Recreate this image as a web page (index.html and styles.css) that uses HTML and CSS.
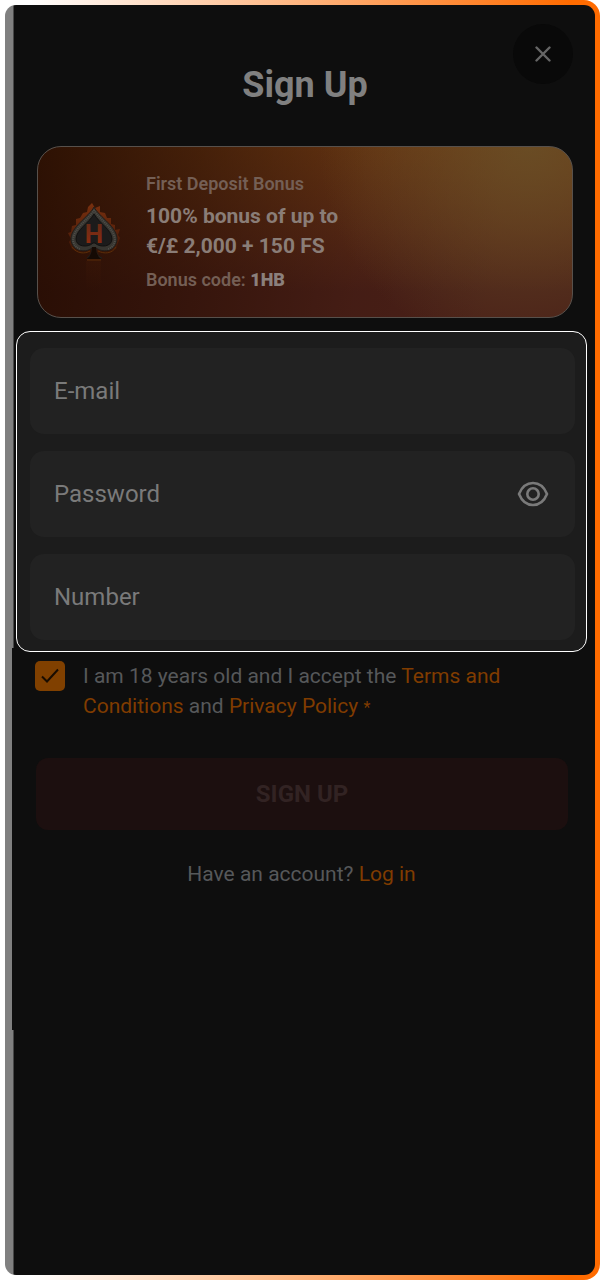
FILE: index.html
```html
<!DOCTYPE html>
<html lang="en">
<head>
  <meta charset="UTF-8">
  <meta name="viewport" content="width=device-width, initial-scale=1">
  <title>Sign Up</title>
  <link rel="stylesheet" href="styles.css">
</head>
<body>
  <div class="frame">
    <main class="panel">
      <header class="header">
        <h1>Sign Up</h1>
        <button class="close" type="button" aria-label="Close">
          <svg width="16" height="16" viewBox="0 0 16 16" fill="none" stroke="currentColor" stroke-width="2.4" stroke-linecap="round">
            <path d="M1.500 1.500 14.500 14.500M14.500 1.500 1.500 14.500"/>
          </svg>
        </button>
      </header>

      <section class="bonus">
        <svg class="spade" width="60" height="116" viewBox="0 -26 60 116" aria-hidden="true">
          <defs>
            <linearGradient id="fire" x1="0" y1="0" x2="0" y2="1">
              <stop offset="0" stop-color="#79300f"/>
              <stop offset=".7" stop-color="#4f1d09"/>
              <stop offset="1" stop-color="#301205"/>
            </linearGradient>
            <linearGradient id="letter" x1="0" y1="0" x2="0" y2="1">
              <stop offset="0" stop-color="#5e2a18"/>
              <stop offset="1" stop-color="#962c0e"/>
            </linearGradient>
            <linearGradient id="beam" x1="0" y1="0" x2="0" y2="1">
              <stop offset="0" stop-color="#4a1d08" stop-opacity=".2"/>
              <stop offset="1" stop-color="#4a1d08" stop-opacity="0"/>
            </linearGradient>
          </defs>
          <path fill="url(#beam)" d="M24 61h15v29H24z"/>
          <path fill="url(#fire)" d="M30 3 33 8 38 6 38 12 43 13 45 18 49 18 49 24 53 25 53 30 58 29 56 35 58 38 56 43 54 49 47 53 37 52 37 56H27L27 52 17 53 10 49 7 42 9 39 6 33 9 32 10 26 14 25 14 19 18 18 21 13 25 12 26 7z"/>
          <path fill="#373530" stroke="#211d1a" d="M32 7C27 17 8 27 9 40c1 10 13 14 21 8 0 5-2 8-5 10h15c-4-2-6-5-6-10 9 6 20 2 21-8C56 27 37 17 32 7z"/>
          <path fill="none" stroke="#4f4e49" stroke-width="2" stroke-dasharray="1 1" d="M32 10C27 19 11 29 11 40q1 7 7 9M32 10c5 9 21 19 21 30q-1 7-7 9"/>
          <path fill="#1c1b1b" stroke="#12100f" d="M32 14C27 23 14 30 14 39c0 8 12 9 17 4h2c5 5 17 4 17-4 0-9-13-16-18-25z"/>
          <path fill="#150a04" d="M30 47h4c0 6 2 9 5 12H25c3-3 5-6 5-12z"/>
          <path fill="none" stroke="#5c2d08" d="M10 47c5 7 13 7 18 4M36 51c6 3 14 3 18-4M25 60h14"/>
          <text class="spade-letter" x="32" y="43" text-anchor="middle" fill="url(#letter)">H</text>
        </svg>
        <div class="bonus-text">
          <p class="bonus-label">First Deposit Bonus</p>
          <p class="bonus-value">100% bonus of up to<br>€/£ 2,000 + 150 FS</p>
          <p class="bonus-label">Bonus code: <strong>1HB</strong></p>
        </div>
      </section>

      <form>
        <div class="fields">
          <div class="field">
            <input type="email" placeholder="E-mail" aria-label="E-mail">
          </div>
          <div class="field">
            <input type="password" placeholder="Password" aria-label="Password">
            <button class="eye" type="button" aria-label="Show password">
              <svg width="32" height="26" viewBox="0 0 32 26" fill="none" stroke="currentColor" stroke-width="2.6">
                <path d="M2 13C5 5.500 10 2 16 2s11 3.500 14 11c-3 7.500-8 11-14 11S5 20.500 2 13z" stroke-linejoin="round"/>
                <circle cx="16" cy="13" r="5.700"/>
              </svg>
            </button>
          </div>
          <div class="field">
            <input type="tel" placeholder="Number" aria-label="Number">
          </div>
        </div>

        <div class="terms">
          <input type="checkbox" id="terms" checked>
          <label for="terms">I am 18 years old and I accept the <a href="#">Terms and Conditions</a> and <a href="#">Privacy Policy</a> <span class="star">*</span></label>
        </div>

        <button class="submit" type="submit">SIGN UP</button>
      </form>

      <p class="login">Have an account? <a href="#">Log in</a></p>
    </main>
  </div>
</body>
</html>
```

FILE: styles.css
```css
* {
  box-sizing: border-box;
}

body {
  margin: 0;
  background-color: #fff;
  font-family: Roboto, "Liberation Sans", sans-serif;
  font-size: 21px;
  line-height: 30px;
  color: #56585a;
}

h1,
p {
  margin: 0;
}

a {
  color: #803c00;
  text-decoration: none;
}

button {
  padding: 0;
  border: none;
  font-family: inherit;
  cursor: pointer;
}

/* white to orange outline */
.frame {
  display: flex;
  min-height: 100vh;
  padding: 5px;
  border-radius: 16px;
  background: linear-gradient(to right, #fff 5%, #ff6b00 95%);
}

/* grey edge on the left, a bit thinner in the middle */
.panel {
  flex: 1;
  padding: 19px 8px 24px 11px;
  border-radius: 11px;
  background:
    linear-gradient(#0e0e0e, #0e0e0e) 7px 643px / 3px 382px no-repeat,
    linear-gradient(to right, #808080 8px, #484848 8px, #484848 9px, #0e0e0e 9px);
}

.header {
  display: grid;
  grid-template-columns: 60px 1fr 60px;
  margin: 0 14px 40px 21px;
}

h1 {
  grid-column: 2;
  padding-top: 40px;
  font-size: 36px;
  line-height: 42px;
  text-align: center;
  color: #808080;
}

.close {
  display: flex;
  align-items: center;
  justify-content: center;
  width: 60px;
  height: 60px;
  border-radius: 50%;
  background-color: #090909;
  color: #666;
}

.bonus {
  display: flex;
  align-items: center;
  gap: 24px;
  margin: 0 14px 13px 21px;
  padding: 22px 24px;
  border: 1px solid #57504b;
  border-radius: 24px;
  background:
    radial-gradient(circle at 92% 0%, rgba(104, 80, 40, .8) 0, rgba(104, 80, 40, 0) 210px),
    linear-gradient(100deg, rgba(34, 10, 0, .85) 0%, rgba(34, 10, 0, .55) 28%, rgba(34, 10, 0, .15) 60%, rgba(34, 10, 0, 0) 85%),
    linear-gradient(to bottom, #6e3a14 0%, #5a2b17 50%, #4a2018 85%);
}

.spade {
  flex: none;
  margin: -8px 0;
}

.spade-letter {
  font-size: 26px;
  font-weight: bold;
}

.bonus-label {
  font-size: 18px;
  font-weight: 600;
  color: #745f55;
}

.bonus-label strong {
  color: #8b807c;
}

.bonus-value {
  margin: 2px 0 4px;
  font-size: 21px;
  font-weight: 700;
  color: #8a7d77;
}

.fields {
  display: flex;
  flex-direction: column;
  gap: 17px;
  padding: 16px 11px 11px 13px;
  border: 1px solid #fff;
  border-radius: 14px;
  background-color: #1c1c1c;
}

.field {
  display: flex;
  align-items: center;
  height: 86px;
  padding: 0 26px 0 24px;
  border-radius: 14px;
  background-color: #222;
}

.field input {
  flex: 1;
  min-width: 0;
  height: 100%;
  padding: 0;
  border: none;
  outline: none;
  background: none;
  font-family: inherit;
  font-size: 24px;
  color: #808080;
}

.field input::placeholder {
  color: #7a7a7a;
  opacity: 1;
}

.eye {
  display: flex;
  background: none;
  color: #7a7a7a;
}

.terms {
  display: flex;
  gap: 18px;
  margin: 9px 19px 37px;
}

.terms input {
  appearance: none;
  flex: none;
  width: 30px;
  height: 30px;
  margin: 0;
  border-radius: 5px;
  background: #804000 url("data:image/svg+xml,%3Csvg xmlns='http://www.w3.org/2000/svg' viewBox='0 0 30 30' fill='none' stroke='%23180c00' stroke-width='2'%3E%3Cpath d='M7 15.500 12 20.500 23 8.500'/%3E%3C/svg%3E");
}

.star {
  font-size: 16px;
  line-height: 1;
  color: #803c00;
}

.submit {
  display: block;
  width: calc(100% - 39px);
  height: 72px;
  margin: 0 19px 29px 20px;
  border-radius: 12px;
  background-color: #1c0f0f;
  font-size: 24px;
  font-weight: 700;
  color: #322323;
}

.login {
  text-align: center;
}
```
